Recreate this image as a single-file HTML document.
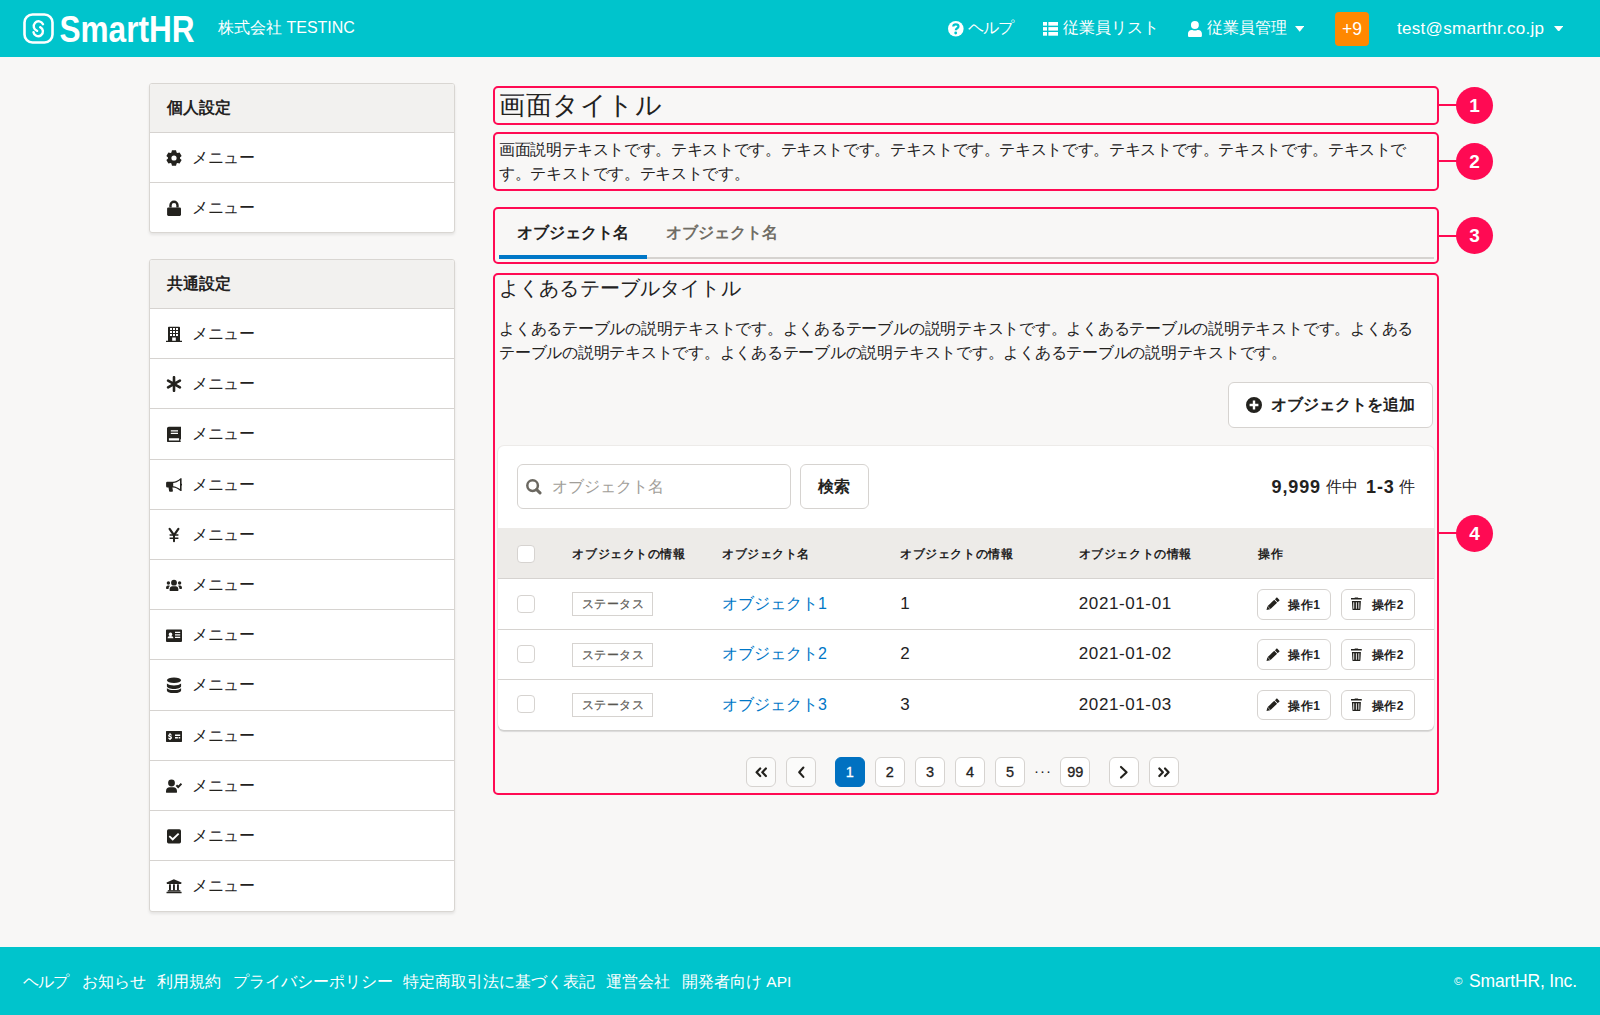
<!DOCTYPE html>
<html lang="ja">
<head>
<meta charset="utf-8">
<style>
*{box-sizing:border-box;margin:0;padding:0}
html,body{width:1600px;height:1015px;overflow:hidden}
body{position:relative;background:#f8f7f6;font-family:"Liberation Sans",sans-serif;color:#23221e;font-size:15.5px}
.abs{position:absolute}
.nw{white-space:nowrap}
/* header */
#hd{position:absolute;left:0;top:0;width:1600px;height:57px;background:#00c4cc;color:#fff}
#ft{position:absolute;left:0;top:946.5px;width:1600px;height:69px;background:#00c4cc;color:#fff}
/* sidebar */
.card{position:absolute;left:149px;width:306px;background:#fff;border:1px solid #d9d6d2;border-radius:3px;box-shadow:0 2px 3px rgba(0,0,0,.08);overflow:hidden}
.card .ch{height:49.5px;background:#f2f1ef;border-bottom:1px solid #d6d3d0;font-weight:bold;font-size:15.5px;line-height:48px;padding-left:16.5px}
.card .it{position:relative;height:50.2px;border-bottom:1px solid #d6d3d0;line-height:49px;padding-left:42px;letter-spacing:-.5px}
.card .it:last-child{border-bottom:none}
.card .it svg{position:absolute;left:16px;top:17px;width:16px;height:16px}
/* annotations */
.ann{position:absolute;left:493px;width:946px;border:2px solid #ff0a53;border-radius:5px}
.dot{position:absolute;left:1456px;width:37px;height:37px;border-radius:50%;background:#ff0a53;color:#fff;font-weight:bold;font-size:19px;text-align:center;line-height:37px}
.lnk{position:absolute;left:1439px;width:18px;height:2px;background:#ff0a53}
.btn{position:absolute;background:#fff;border:1px solid #d6d3d0;border-radius:6px}
.cnt{top:30px;font-size:15.5px;line-height:22px}
.th{letter-spacing:.55px;font-size:12px;line-height:20px;font-weight:bold}
.td{font-size:16px;line-height:22px}
.dg{font-size:17px;letter-spacing:.6px}
.tag{letter-spacing:.5px;padding-left:1px;width:81px;height:24px;border:1px solid #d6d3d0;font-size:12.2px;line-height:22px;text-align:center;color:#5a5752;-webkit-text-stroke:.2px}
.sb{width:73.8px;height:30.8px;border-radius:6px}
.sbt{letter-spacing:.4px;top:5px;font-size:12px;line-height:20px;font-weight:bold}
.pg{top:757.2px;width:30.3px;height:30.3px;border:1px solid #d6d3d0;border-radius:6px;font-size:14.5px;line-height:29px;text-align:center;-webkit-text-stroke:.3px}
</style>
</head>
<body>
<div id="hd">
  <svg class="abs" style="left:23px;top:13px" width="31" height="31" viewBox="0 0 31 31">
    <rect x="1.5" y="1.5" width="28" height="28" rx="8" fill="none" stroke="#fff" stroke-width="2.6"/>
    <path d="M20 11.2A4.85 4.85 0 1 0 14.1 17.8M17.2 14.2A4.75 4.75 0 1 1 10.5 19.3" fill="none" stroke="#fff" stroke-width="2.4" stroke-linecap="round"/>
  </svg>
  <svg class="abs" style="left:58px;top:8px" width="140" height="40" viewBox="0 0 140 40">
    <text x="1.5" y="33.5" textLength="135" lengthAdjust="spacingAndGlyphs" font-family="Liberation Sans" font-weight="bold" font-size="36.5" fill="#fff">SmartHR</text>
  </svg>
  <div class="abs nw" style="left:218px;top:18px;font-size:16px;line-height:20px">株式会社 TESTINC</div>
  <svg class="abs" style="left:948px;top:21px" width="15.6" height="15.6" viewBox="0 0 16 16"><circle cx="8" cy="8" r="8" fill="#fff"/><path d="M5.4 5.6C5.5 4 6.6 3.4 8 3.4c1.5 0 2.7 .8 2.7 2.2 0 1.9-2.7 1.8-2.7 3.9" fill="none" stroke="#00c4cc" stroke-width="2.3"/><circle cx="7.9" cy="12.3" r="1.45" fill="#00c4cc"/></svg>
  <div class="abs nw" style="left:968px;top:18px;font-size:15.5px;line-height:20px;letter-spacing:-.8px">ヘルプ</div>
  <svg class="abs" style="left:1042.8px;top:22.1px" width="15.6" height="13.7" viewBox="0 0 15.6 13.7" fill="#fff"><rect x="0" y="0" width="4" height="3.65"/><rect x="5.4" y="0" width="10.2" height="3.65"/><rect x="0" y="5.1" width="4" height="3.5"/><rect x="5.4" y="5.1" width="10.2" height="3.5"/><rect x="0" y="10" width="4" height="3.7"/><rect x="5.4" y="10" width="10.2" height="3.7"/></svg>
  <div class="abs nw" style="left:1063px;top:18px;font-size:15.5px;line-height:20px">従業員リスト</div>
  <svg class="abs" style="left:1187.8px;top:20.9px" width="14" height="16" viewBox="0 0 14 16" fill="#fff"><circle cx="6.9" cy="4" r="3.95"/><path d="M3.4 9h1.1c.8 .4 1.6 .6 2.4 .6s1.6-.2 2.4-.6h1.1c1.9 0 3.5 1.6 3.5 3.5v2.6a.8 .8 0 0 1-.8 .8H.8a.8 .8 0 0 1-.8-.8v-2.6C-.1 10.6 1.5 9 3.4 9z"/></svg>
  <div class="abs nw" style="left:1207px;top:18px;font-size:15.5px;line-height:20px">従業員管理</div>
  <svg class="abs" style="left:1295px;top:25.8px" width="9.4" height="5.8" viewBox="0 0 9.4 5.8"><path d="M0 0h9.4L4.7 5.8z" fill="#fff"/></svg>
  <div class="abs" style="left:1335px;top:11.5px;width:34px;height:34.5px;background:#ff8800;border-radius:4px;font-size:17.5px;line-height:34.5px;text-align:center">+9</div>
  <div class="abs nw" style="left:1397px;top:19px;font-size:17px;line-height:20px;letter-spacing:.3px">test@smarthr.co.jp</div>
  <svg class="abs" style="left:1553.5px;top:25.6px" width="9.4" height="5.8" viewBox="0 0 9.4 5.8"><path d="M0 0h9.4L4.7 5.8z" fill="#fff"/></svg>
</div>

<div id="ft">
  <div class="abs nw" style="left:23px;top:25px;font-size:15.5px;line-height:20px;letter-spacing:-1.2px">ヘルプ</div>
  <div class="abs nw" style="left:82px;top:25px;font-size:15.5px;line-height:20px">お知らせ</div>
  <div class="abs nw" style="left:157px;top:25px;font-size:15.5px;line-height:20px">利用規約</div>
  <div class="abs nw" style="left:233px;top:25px;font-size:15.5px;line-height:20px">プライバシーポリシー</div>
  <div class="abs nw" style="left:403px;top:25px;font-size:15.5px;line-height:20px">特定商取引法に基づく表記</div>
  <div class="abs nw" style="left:606px;top:25px;font-size:15.5px;line-height:20px">運営会社</div>
  <div class="abs nw" style="left:682px;top:25px;font-size:15.5px;line-height:20px">開発者向け API</div>
  <div class="abs nw" style="left:1454px;top:27px;font-size:11.5px;line-height:14px">©</div>
  <div class="abs nw" style="left:1469px;top:24.5px;font-size:17.5px;line-height:20px;letter-spacing:-.15px">SmartHR, Inc.</div>
</div>

<!-- sidebar -->
<div class="card" style="top:82.5px;height:150px">
  <div class="ch">個人設定</div>
  <div class="it"><svg style="top:17px" viewBox="0 0 16 16" fill="#23221e"><path fill-rule="evenodd" d="M5.39 2.60 L5.97 0.37 L10.03 0.37 L10.61 2.60 L11.37 3.04 L13.60 2.42 L15.63 5.94 L13.98 7.56 L13.98 8.44 L15.63 10.06 L13.60 13.58 L11.37 12.96 L10.61 13.40 L10.03 15.63 L5.97 15.63 L5.39 13.40 L4.63 12.96 L2.40 13.58 L0.37 10.06 L2.02 8.44 L2.02 7.56 L0.37 5.94 L2.40 2.42 L4.63 3.04Z M5.40 8 a2.60 2.60 0 1 0 5.20 0 a2.60 2.60 0 1 0 -5.20 0Z"/></svg>メニュー</div>
  <div class="it"><svg style="top:17px" viewBox="0 0 16 16" fill="#23221e"><path d="M3.3 7.6V5.2a4.7 4.7 0 0 1 9.4 0v2.4h-2.4V5.2a2.3 2.3 0 0 0-4.6 0v2.4z"/><rect x="1.1" y="7.4" width="13.9" height="8.5" rx="1.3"/></svg>メニュー</div>
</div>
<div class="card" style="top:258.6px;height:653px">
  <div class="ch">共通設定</div>
  <div class="it"><svg style="top:17px" viewBox="0 0 16 16" fill="#23221e"><path fill-rule="evenodd" d="M2.9 0.8h10.2a.9 .9 0 0 1 .9.9V14.8h2v1.2H0v-1.2h2V1.7a.9 .9 0 0 1 .9-.9z M4 2h2v2h-2z M7 2h2v2h-2z M10 2h2v2h-2z M4 5h2v2h-2z M7 5h2v2h-2z M10 5h2v2h-2z M4 8h2v2h-2z M7 8h2v2h-2z M10 8h2v2h-2z M6.2 11.6h3.6v3.2h-3.6z"/></svg>メニュー</div>
  <div class="it"><svg style="top:17px" viewBox="0 0 16 16" fill="#23221e"><g stroke="#23221e" stroke-width="2.6" stroke-linecap="round"><path d="M8 1.2v13.6M2.1 4.6l11.8 6.8M2.1 11.4l11.8-6.8"/></g></svg>メニュー</div>
  <div class="it"><svg style="top:17px" viewBox="0 0 16 16" fill="#23221e"><path fill-rule="evenodd" d="M2.8 0.7h12.2v12.3l-.6 .6v1.6l.6 .6v.7H2.8a1.8 1.8 0 0 1-1.8-1.8V2.5a1.8 1.8 0 0 1 1.8-1.8z M4.8 4.2h7.2v1.4h-7.2z M4.8 6.7h7.2v1.2h-7.2z M2.9 12.3h10.2v2.3H2.9z"/></svg>メニュー</div>
  <div class="it"><svg style="top:17px" viewBox="0 0 16 16" fill="#23221e"><path fill-rule="evenodd" d="M0.1 6a1.2 1.2 0 0 1 1.2-1.2h5.6c2.6 0 5.4-1.5 7.6-3.6h1.1v5.5c.4 .1 .6 .5 .6 .9s-.2 .8-.6 .9v5.5h-1.1c-2.2-2.1-5-3.6-7.6-3.6h-.5l.5 3.4a.8 .8 0 0 1-.8 .9H3.9a.8 .8 0 0 1-.8-.7L2.5 10.4H1.3A1.2 1.2 0 0 1 .1 9.2z M7.2 6.1v3.2c2.3 .2 4.6 1.3 6.8 2.8V3.3C11.8 4.8 9.5 5.9 7.2 6.1z"/></svg>メニュー</div>
  <div class="it"><svg style="top:17px" viewBox="0 0 16 16" fill="#23221e"><g stroke="#23221e" fill="none"><path d="M3.6 1.8L8 8.2l4.4-6.4" stroke-width="2.2" stroke-linecap="round"/><path d="M8 8v6.2" stroke-width="2" stroke-linecap="round"/><path d="M3.6 7.9h8.8M3.6 11.2h8.8" stroke-width="1.5"/></g></svg>メニュー</div>
  <div class="it"><svg style="top:17px" viewBox="0 0 16 16" fill="#23221e"><circle cx="8" cy="5.7" r="2.9"/><circle cx="2.4" cy="6" r="1.7"/><circle cx="13.6" cy="6" r="1.7"/><path d="M3.6 12.6c0-2.2 1.4-3.3 2.6-3.3h3.6c1.2 0 2.6 1.1 2.6 3.3v.6a.9 .9 0 0 1-.9 .9H4.5a.9 .9 0 0 1-.9-.9z"/><path d="M0 11.2c0-1.5.8-2.6 1.8-2.6h1.6l.4 .3C3 9.7 2.6 10.6 2.5 11.9H.9A.9 .9 0 0 1 0 11z"/><path d="M16 11.2c0-1.5-.8-2.6-1.8-2.6h-1.6l-.4 .3c.8 .8 1.2 1.7 1.3 3H15.1a.9 .9 0 0 0 .9-.9z"/></svg>メニュー</div>
  <div class="it"><svg style="top:17px" viewBox="0 0 16 16" fill="#23221e"><path fill-rule="evenodd" d="M1 2.5h14a1 1 0 0 1 1 1v10.5a1 1 0 0 1-1 1H1a1 1 0 0 1-1-1V3.5a1 1 0 0 1 1-1z M4.5 5.5a1.8 1.8 0 1 0 .01 0z M1.6 11.2c0-1.4 1.2-2.3 2.9-2.3s2.9 .9 2.9 2.3z M9 4.8h5.2v1.3H9z M9 7.3h5.2v1.3H9z M9 9.8h5.2v1.3H9z"/></svg>メニュー</div>
  <div class="it"><svg style="top:17px" viewBox="0 0 16 16" fill="#23221e"><ellipse cx="8" cy="3.2" rx="7.1" ry="2.8"/><path d="M.9 6.6c1.4 1.2 4 1.9 7.1 1.9s5.7-.7 7.1-1.9v2.6c0 1.5-3.2 2.8-7.1 2.8S.9 10.7.9 9.2z"/><path d="M.9 11.2c1.4 1.2 4 1.9 7.1 1.9s5.7-.7 7.1-1.9v2.3c0 1.5-3.2 2.8-7.1 2.8S.9 15 .9 13.5z"/></svg>メニュー</div>
  <div class="it"><svg style="top:17px" viewBox="0 0 16 16" fill="#23221e"><path fill-rule="evenodd" d="M.6 2.9h14.8a.6 .6 0 0 1 .6 .6v9.8a.6 .6 0 0 1-.6 .6H.6a.6 .6 0 0 1-.6-.6V3.5a.6 .6 0 0 1 .6-.6z M9 6.6h5.2v1.3H9z M9 9.1h2.9v1.3H9z M12.6 9.1h1.6v1.3h-1.6z M3.3 5.2h1.4v1c.6 .1 1 .4 1.3 .8l-.9 .7c-.3-.3-.7-.4-1.1-.4-.3 0-.5 .1-.5 .3s.3 .3 .8 .5c.9 .3 1.7 .7 1.7 1.6 0 .8-.6 1.3-1.3 1.4v1H3.3v-1c-.6-.1-1.1-.4-1.4-.9l.9-.7c.3 .4 .7 .5 1.2 .5.4 0 .6-.1 .6-.3s-.3-.3-.9-.5c-.9-.3-1.6-.7-1.6-1.6 0-.7 .5-1.2 1.2-1.4z"/></svg>メニュー</div>
  <div class="it"><svg style="top:17px" viewBox="0 0 16 16" fill="#23221e"><circle cx="5.5" cy="5" r="3.4"/><path d="M0 13.2c0-2.4 1.6-4 3.6-4h3.8c2 0 3.6 1.6 3.6 4v.7a.9 .9 0 0 1-.9 .9H.9a.9 .9 0 0 1-.9-.9z"/><path d="M10.4 7.2l1.8 1.8 3.3-3.3" fill="none" stroke="#23221e" stroke-width="2"/></svg>メニュー</div>
  <div class="it"><svg style="top:17px" viewBox="0 0 16 16" fill="#23221e"><path fill-rule="evenodd" d="M2.6 1.3h10.8A1.6 1.6 0 0 1 15 2.9v10.9a1.6 1.6 0 0 1-1.6 1.6H2.6A1.6 1.6 0 0 1 1 13.8V2.9a1.6 1.6 0 0 1 1.6-1.6z M3.9 7.5l-1.2 1.3 4 3.9 6.6-6.5-1.3-1.3-5.3 5.2z"/></svg>メニュー</div>
  <div class="it"><svg style="top:17px" viewBox="0 0 16 16" fill="#23221e"><path d="M7.9 1.3l7.6 3.2v.7l-.6.7H1.2l-.6-.7v-.7z"/><rect x="3" y="6.3" width="1.9" height="6.1"/><rect x="7" y="6.3" width="1.9" height="6.1"/><rect x="11" y="6.3" width="1.9" height="6.1"/><rect x="1.8" y="12.2" width="12.6" height="1.4"/><rect x="0.5" y="13.8" width="15.1" height="1.4" rx=".3"/></svg>メニュー</div>
</div>


<!-- main content -->
<div class="abs nw" style="left:499px;top:89px;font-size:26px;line-height:32px;letter-spacing:.5px">画面タイトル</div>
<div class="abs nw" style="left:499px;top:138px;font-size:15.5px;line-height:24px;letter-spacing:-.36px">画面説明テキストです。テキストです。テキストです。テキストです。テキストです。テキストです。テキストです。テキストで<br>す。テキストです。テキストです。</div>

<!-- tabs -->
<div class="abs" style="left:499px;top:257.3px;width:935px;height:1.7px;background:#d6d3d0"></div>
<div class="abs" style="left:498.8px;top:255px;width:148.5px;height:3.5px;background:#0077c7"></div>
<div class="abs nw" style="left:517px;top:223px;font-size:16px;line-height:20px;font-weight:bold">オブジェクト名</div>
<div class="abs nw" style="left:666px;top:223px;font-size:16px;line-height:20px;font-weight:bold;color:#706d65">オブジェクト名</div>

<!-- table section -->
<div class="abs nw" style="left:499px;top:276px;font-size:19.5px;line-height:24px;letter-spacing:.15px">よくあるテーブルタイトル</div>
<div class="abs nw" style="left:499px;top:317px;font-size:15.5px;line-height:24.3px;letter-spacing:-.24px">よくあるテーブルの説明テキストです。よくあるテーブルの説明テキストです。よくあるテーブルの説明テキストです。よくある<br>テーブルの説明テキストです。よくあるテーブルの説明テキストです。よくあるテーブルの説明テキストです。</div>

<div class="btn" style="left:1228px;top:382px;width:205px;height:45.5px">
  <svg class="abs" style="left:17px;top:14px" width="16" height="16" viewBox="0 0 16 16"><path fill="#23221e" fill-rule="evenodd" d="M8 0a8 8 0 1 1 0 16A8 8 0 0 1 8 0z M6.8 3.6v3.2H3.6v2.4h3.2v3.2h2.4V9.2h3.2V6.8H9.2V3.6z"/></svg>
  <div class="abs nw" style="left:42px;top:11px;font-size:16px;line-height:22px;font-weight:bold">オブジェクトを追加</div>
</div>

<div class="abs" style="left:498.2px;top:446.2px;width:935.5px;height:284.3px;background:#fff;border-radius:6px;box-shadow:0 0 0 1px rgba(60,50,40,.06),0 1.5px 1px rgba(0,0,0,.12);overflow:hidden">
  <div class="abs" style="left:18.8px;top:18px;width:273.8px;height:45.3px;border:1px solid #d6d3d0;border-radius:6px;background:#fff">
    <svg class="abs" style="left:8.5px;top:14px" width="16" height="16" viewBox="0 0 16 16"><circle cx="6.6" cy="6.6" r="5.3" fill="none" stroke="#6b6861" stroke-width="2.5"/><path d="M10.6 10.6l3.4 3.3" stroke="#6b6861" stroke-width="3" stroke-linecap="round"/></svg>
    <div class="abs nw" style="left:34px;top:11px;font-size:15.5px;line-height:22px;color:#a19e99">オブジェクト名</div>
  </div>
  <div class="btn" style="left:302.3px;top:18px;width:68.3px;height:45.3px">
    <div class="abs nw" style="left:17px;top:11px;font-size:16px;line-height:22px;font-weight:bold">検索</div>
  </div>
  <div class="abs nw cnt" style="left:773.3px;font-weight:bold;font-size:18px;letter-spacing:.9px">9,999</div>
  <div class="abs nw cnt" style="left:828.3px">件中</div>
  <div class="abs nw cnt" style="left:867.8px;font-weight:bold;font-size:18px;letter-spacing:.9px">1-3</div>
  <div class="abs nw cnt" style="left:900.8px">件</div>

  <div class="abs" style="left:0;top:81.8px;width:100%;height:51.5px;background:#edebe8;border-bottom:1px solid #d6d3d0"></div>
  <div class="abs" style="left:0;top:182.8px;width:100%;height:1px;background:#d6d3d0"></div>
  <div class="abs" style="left:0;top:233px;width:100%;height:1px;background:#d6d3d0"></div>
  <div class="abs" style="left:18.8px;top:99.0px;width:18px;height:18px;border:1px solid #d6d3d0;border-radius:4px;background:#fff"></div>
  <div class="abs nw th" style="left:74.3px;top:97.8px">オブジェクトの情報</div>
  <div class="abs nw th" style="left:223.8px;top:97.8px">オブジェクト名</div>
  <div class="abs nw th" style="left:402.1px;top:97.8px">オブジェクトの情報</div>
  <div class="abs nw th" style="left:580.6px;top:97.8px">オブジェクトの情報</div>
  <div class="abs nw th" style="left:759.8px;top:97.8px">操作</div>
  <div class="abs" style="left:18.8px;top:148.6px;width:18px;height:18px;border:1px solid #d6d3d0;border-radius:4px;background:#fff"></div>
  <div class="abs nw tag" style="left:73.8px;top:146.1px">ステータス</div>
  <div class="abs nw td" style="left:223.8px;top:146.8px;color:#0077c7">オブジェクト1</div>
  <div class="abs nw td dg" style="left:402.1px;top:146.8px">1</div>
  <div class="abs nw td dg" style="left:580.6px;top:146.8px">2021-01-01</div>
  <div class="btn sb" style="left:759.3px;top:142.8px"><svg class="abs" style="left:8px;top:7.5px" width="14" height="14" viewBox="0 0 14 14"><path fill="#23221e" d="M0.50 12.90 L4.24 12.20 L1.43 9.21Z M4.53 11.93 L11.08 5.76 L8.27 2.77 L1.72 8.94Z M11.74 5.14 L13.70 3.29 L10.90 0.31 L8.93 2.16Z"/></svg><div class="abs nw sbt" style="left:30px">操作1</div></div>
  <div class="btn sb" style="left:842.8px;top:142.8px"><svg class="abs" style="left:9px;top:7.5px" width="12" height="14" viewBox="0 0 12 14" fill="#23221e"><path fill-rule="evenodd" d="M0 1.1h3.4l.6-.7h2.8l.6 .7h3.4v1.3H0z M.9 3.9h9l-.5 8.3a1 1 0 0 1-1 .9H2.4a1 1 0 0 1-1-.9z M2.3 5.3v6.4h.9V5.3z M4.9 5.3v6.4h.9V5.3z M7.4 5.3v6.4h.9V5.3z"/></svg><div class="abs nw sbt" style="left:30px">操作2</div></div>
  <div class="abs" style="left:18.8px;top:198.9px;width:18px;height:18px;border:1px solid #d6d3d0;border-radius:4px;background:#fff"></div>
  <div class="abs nw tag" style="left:73.8px;top:196.4px">ステータス</div>
  <div class="abs nw td" style="left:223.8px;top:197.1px;color:#0077c7">オブジェクト2</div>
  <div class="abs nw td dg" style="left:402.1px;top:197.1px">2</div>
  <div class="abs nw td dg" style="left:580.6px;top:197.1px">2021-01-02</div>
  <div class="btn sb" style="left:759.3px;top:193.1px"><svg class="abs" style="left:8px;top:7.5px" width="14" height="14" viewBox="0 0 14 14"><path fill="#23221e" d="M0.50 12.90 L4.24 12.20 L1.43 9.21Z M4.53 11.93 L11.08 5.76 L8.27 2.77 L1.72 8.94Z M11.74 5.14 L13.70 3.29 L10.90 0.31 L8.93 2.16Z"/></svg><div class="abs nw sbt" style="left:30px">操作1</div></div>
  <div class="btn sb" style="left:842.8px;top:193.1px"><svg class="abs" style="left:9px;top:7.5px" width="12" height="14" viewBox="0 0 12 14" fill="#23221e"><path fill-rule="evenodd" d="M0 1.1h3.4l.6-.7h2.8l.6 .7h3.4v1.3H0z M.9 3.9h9l-.5 8.3a1 1 0 0 1-1 .9H2.4a1 1 0 0 1-1-.9z M2.3 5.3v6.4h.9V5.3z M4.9 5.3v6.4h.9V5.3z M7.4 5.3v6.4h.9V5.3z"/></svg><div class="abs nw sbt" style="left:30px">操作2</div></div>
  <div class="abs" style="left:18.8px;top:249.2px;width:18px;height:18px;border:1px solid #d6d3d0;border-radius:4px;background:#fff"></div>
  <div class="abs nw tag" style="left:73.8px;top:246.7px">ステータス</div>
  <div class="abs nw td" style="left:223.8px;top:247.4px;color:#0077c7">オブジェクト3</div>
  <div class="abs nw td dg" style="left:402.1px;top:247.4px">3</div>
  <div class="abs nw td dg" style="left:580.6px;top:247.4px">2021-01-03</div>
  <div class="btn sb" style="left:759.3px;top:243.4px"><svg class="abs" style="left:8px;top:7.5px" width="14" height="14" viewBox="0 0 14 14"><path fill="#23221e" d="M0.50 12.90 L4.24 12.20 L1.43 9.21Z M4.53 11.93 L11.08 5.76 L8.27 2.77 L1.72 8.94Z M11.74 5.14 L13.70 3.29 L10.90 0.31 L8.93 2.16Z"/></svg><div class="abs nw sbt" style="left:30px">操作1</div></div>
  <div class="btn sb" style="left:842.8px;top:243.4px"><svg class="abs" style="left:9px;top:7.5px" width="12" height="14" viewBox="0 0 12 14" fill="#23221e"><path fill-rule="evenodd" d="M0 1.1h3.4l.6-.7h2.8l.6 .7h3.4v1.3H0z M.9 3.9h9l-.5 8.3a1 1 0 0 1-1 .9H2.4a1 1 0 0 1-1-.9z M2.3 5.3v6.4h.9V5.3z M4.9 5.3v6.4h.9V5.3z M7.4 5.3v6.4h.9V5.3z"/></svg><div class="abs nw sbt" style="left:30px">操作2</div></div>
</div>
<!-- pagination -->
<div class="abs pg" style="left:745.5px;background:#fbfbfa"><svg class="abs" style="left:7px;top:7px" width="16" height="16" viewBox="0 0 16 16"><path d="M6.2 3.5L2.6 7.25l3.6 3.75M11.9 3.5L8.3 7.25l3.6 3.75" fill="none" stroke="#23221e" stroke-width="2.2" stroke-linecap="round" stroke-linejoin="round"/></svg></div>
<div class="abs pg" style="left:785.7px;background:#fbfbfa"><svg class="abs" style="left:7px;top:7px" width="16" height="16" viewBox="0 0 16 16"><path d="M9.4 2.5L5.2 7.2l4.2 4.7" fill="none" stroke="#23221e" stroke-width="2.1" stroke-linecap="round" stroke-linejoin="round"/></svg></div>
<div class="abs pg" style="left:834.6px;background:#0071c1;border-color:#0071c1;color:#fff">1</div>
<div class="abs pg" style="left:874.7px;background:#fff">2</div>
<div class="abs pg" style="left:914.9px;background:#fff">3</div>
<div class="abs pg" style="left:954.9px;background:#fff">4</div>
<div class="abs pg" style="left:994.9px;background:#fff">5</div>
<div class="abs nw" style="left:1034px;top:760px;font-size:15px;line-height:22px;letter-spacing:1px">···</div>
<div class="abs pg" style="left:1060.2px;background:#fff">99</div>
<div class="abs pg" style="left:1109.2px;background:#fff"><svg class="abs" style="left:7px;top:7px" width="16" height="16" viewBox="0 0 16 16"><path d="M4 1.9l5.6 5.3-5.6 5.4" fill="none" stroke="#23221e" stroke-width="2.1" stroke-linecap="round" stroke-linejoin="round"/></svg></div>
<div class="abs pg" style="left:1149.2px;background:#fff"><svg class="abs" style="left:7px;top:7px" width="16" height="16" viewBox="0 0 16 16"><path d="M2.3 3.5l3.6 3.75-3.6 3.75M8 3.5l3.6 3.75-3.6 3.75" fill="none" stroke="#23221e" stroke-width="2.2" stroke-linecap="round" stroke-linejoin="round"/></svg></div>

<!-- annotations -->
<div class="ann" style="top:86px;height:38.5px"></div>
<div class="ann" style="top:131.7px;height:59px"></div>
<div class="ann" style="top:207px;height:57px"></div>
<div class="ann" style="top:272.5px;height:522px"></div>
<div class="dot" style="top:87px">1</div><div class="lnk" style="top:104px"></div>
<div class="dot" style="top:143px">2</div><div class="lnk" style="top:160px"></div>
<div class="dot" style="top:217px">3</div><div class="lnk" style="top:234.5px"></div>
<div class="dot" style="top:514.5px">4</div><div class="lnk" style="top:532px"></div>

</body>
</html>
